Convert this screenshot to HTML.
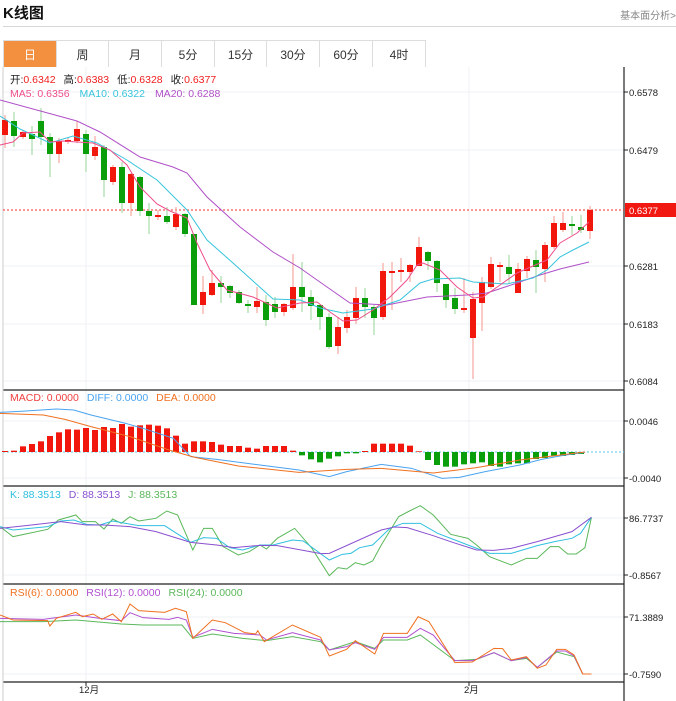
<!DOCTYPE html>
<html><head><meta charset="utf-8">
<style>
*{margin:0;padding:0;box-sizing:border-box}
body{width:676px;height:701px;background:#fff;font-family:"Liberation Sans","Noto Sans CJK SC",sans-serif;position:relative;overflow:hidden}
.title{position:absolute;left:3px;top:2px;font-size:15px;font-weight:bold;color:#111}
.link{position:absolute;right:0;top:7px;font-size:10px;color:#888}
.hr{position:absolute;left:3px;right:0;top:26px;height:1px;background:#d6d6d6}
.tabs{position:absolute;left:3px;top:40px;height:27px;display:flex;border-top:1px solid #ddd;border-left:1px solid #ddd}
.tab{height:26px;border-right:1px solid #ddd;font-size:12px;color:#333;display:flex;align-items:center;justify-content:center}
.tab.on{background:#f39040;color:#fff}
svg{position:absolute;left:0;top:0}
</style></head><body>
<div class="title">K线图</div>
<div class="link">基本面分析&gt;</div>
<div class="hr"></div>
<div class="tabs">
<div class="tab on" style="width:53px">日</div>
<div class="tab" style="width:52px">周</div>
<div class="tab" style="width:53px">月</div>
<div class="tab" style="width:53px">5分</div>
<div class="tab" style="width:52px">15分</div>
<div class="tab" style="width:53px">30分</div>
<div class="tab" style="width:53px">60分</div>
<div class="tab" style="width:53px">4时</div>
</div>
<svg id="s" width="676" height="701" xmlns="http://www.w3.org/2000/svg" font-family="Liberation Sans, Noto Sans CJK SC, sans-serif">
<g stroke="#edf1f4" stroke-width="1">
<line x1="3" y1="92" x2="624" y2="92"/><line x1="3" y1="150" x2="624" y2="150"/><line x1="3" y1="266" x2="624" y2="266"/><line x1="3" y1="324" x2="624" y2="324"/><line x1="3" y1="381" x2="624" y2="381"/>
<line x1="3" y1="421" x2="624" y2="421"/><line x1="3" y1="478" x2="624" y2="478"/>
<line x1="3" y1="518" x2="624" y2="518"/><line x1="3" y1="575" x2="624" y2="575"/>
<line x1="3" y1="617" x2="624" y2="617"/><line x1="3" y1="674" x2="624" y2="674"/>
<line x1="86" y1="67" x2="86" y2="682"/><line x1="469" y1="67" x2="469" y2="682"/>
</g>
<g stroke="#222" stroke-width="1.2">
<line x1="624" y1="67" x2="624" y2="701"/>
<line x1="3" y1="390" x2="624" y2="390"/><line x1="3" y1="486" x2="624" y2="486"/><line x1="3" y1="584" x2="624" y2="584"/><line x1="3" y1="682" x2="624" y2="682"/>
</g>
<line x1="3" y1="67" x2="3" y2="701" stroke="#ccc"/>
<g stroke="#222"><line x1="624" y1="92" x2="628" y2="92"/><line x1="624" y1="150" x2="628" y2="150"/><line x1="624" y1="266" x2="628" y2="266"/><line x1="624" y1="324" x2="628" y2="324"/><line x1="624" y1="381" x2="628" y2="381"/><line x1="624" y1="421" x2="628" y2="421"/><line x1="624" y1="478" x2="628" y2="478"/><line x1="624" y1="518" x2="628" y2="518"/><line x1="624" y1="575" x2="628" y2="575"/><line x1="624" y1="617" x2="628" y2="617"/><line x1="624" y1="674" x2="628" y2="674"/><line x1="86" y1="682" x2="86" y2="686"/><line x1="469" y1="682" x2="469" y2="686"/></g>
<g font-size="9.5" fill="#222">
<text x="629" y="96">0.6578</text><text x="629" y="154">0.6479</text><text x="629" y="270">0.6281</text><text x="629" y="328">0.6183</text><text x="629" y="385">0.6084</text>
<text x="629" y="425">0.0046</text><text x="629" y="482">-0.0040</text>
<text x="629" y="522">86.7737</text><text x="629" y="579">-0.8567</text>
<text x="629" y="621">71.3889</text><text x="629" y="678">-0.7590</text>
<text x="79" y="693">12月</text><text x="464" y="693">2月</text>
</g>
<line x1="3" y1="210" x2="624" y2="210" stroke="#f03030" stroke-dasharray="2,2"/>
<rect x="625" y="203" width="51" height="14" fill="#f01810"/>
<text x="629" y="214" font-size="9.5" fill="#fff">0.6377</text>
<line x1="3" y1="452" x2="624" y2="452" stroke="#5bc8e8" stroke-dasharray="2,2"/>
<g font-size="10.5">
<text x="10" y="83"><tspan fill="#222">开:</tspan><tspan fill="#f02020">0.6342</tspan><tspan fill="#222" dx="8">高:</tspan><tspan fill="#f02020">0.6383</tspan><tspan fill="#222" dx="8">低:</tspan><tspan fill="#f02020">0.6328</tspan><tspan fill="#222" dx="8">收:</tspan><tspan fill="#f02020">0.6377</tspan></text>
<text x="10" y="97"><tspan fill="#ee4d8a">MA5: 0.6356</tspan><tspan fill="#38c4dc" dx="10">MA10: 0.6322</tspan><tspan fill="#b050c8" dx="10">MA20: 0.6288</tspan></text>
<text x="10" y="401"><tspan fill="#f04040">MACD: 0.0000</tspan><tspan fill="#4aa3f0" dx="8">DIFF: 0.0000</tspan><tspan fill="#f07020" dx="8">DEA: 0.0000</tspan></text>
<text x="10" y="498"><tspan fill="#30c0e0">K: 88.3513</tspan><tspan fill="#8a50d0" dx="8">D: 88.3513</tspan><tspan fill="#5ab85a" dx="8">J: 88.3513</tspan></text>
<text x="10" y="596"><tspan fill="#f07020">RSI(6): 0.0000</tspan><tspan fill="#b050d0" dx="8">RSI(12): 0.0000</tspan><tspan fill="#5ab85a" dx="8">RSI(24): 0.0000</tspan></text>
</g>
<g id="dyn"></g>
</svg>
<script>
var NS="http://www.w3.org/2000/svg",g=document.getElementById("dyn");
function el(t,a){var e=document.createElementNS(NS,t);for(var k in a)e.setAttribute(k,a[k]);g.appendChild(e);return e;}
function pl(pts,c,w){el("polyline",{points:pts.map(function(p){return p[0]+","+p[1]}).join(" "),fill:"none",stroke:c,"stroke-width":w||1});}
function z(pts,y0){return pts.map(function(p){return [p[0]/2.308,y0+p[1]/3]});}
var C=[["r",120,135,115,148],["g",121,136,112,147],["r",132,137,130,139],["g",134,139,126,155],["g",121,137,108,145],["g",137,154,133,177],["r",141,154,138,163],["r",140,142,138,144],["r",129,141,121,143],["g",134,154,130,172],["r",147,156,136,160],["g",147,180,145,197],["r",167,182,165,185],["g",167,203,162,213],["r",174,203,173,216],["g",177,211,176,216],["g",211,216,203,234],["r",215,217,210,220],["g",216,222,207,224],["r",214,227,207,230],["g",214,234,213,237],["g",234,305,234,305],["r",292,305,276,314],["r",283,295,270,296],["g",283,287,276,303],["g",286,293,285,298],["g",292,303,290,304],["g",304,306,300,313],["r",301,307,287,313],["g",302,320,295,326],["g",304,312,297,318],["r",304,312,303,316],["r",287,308,254,310],["g",287,297,262,312],["g",297,306,290,320],["g",305,317,305,330],["g",317,347,313,349],["r",327,346,317,354],["r",317,328,310,333],["r",298,318,287,324],["g",298,307,288,318],["g",307,318,305,335],["r",271,317,263,320],["r",271,272,262,310],["r",270,272,258,282],["r",265,272,264,282],["r",247,266,237,266],["g",252,261,251,270],["g",261,283,260,292],["g",284,300,284,308],["g",298,309,288,314],["r",308,310,278,313],["r",299,338,292,379],["r",282,303,277,331],["r",264,287,257,289],["r",265,267,262,282],["g",267,274,255,283],["r",269,293,263,293],["r",259,271,256,278],["g",260,267,250,293],["r",245,269,242,282],["r",223,247,216,249],["r",223,230,212,232],["g",224,225,216,235],["g",227,230,215,233],["r",210,231,206,239]];
C.forEach(function(c,i){var x=5+9*i,col=c[0]=="r"?"#f2170c":"#0b9e0b",wc=c[0]=="r"?"#f7a8a0":"#a8dca8";
el("line",{x1:x,x2:x,y1:c[3],y2:c[4],stroke:wc,"stroke-width":1.2});
el("rect",{x:x-3,y:c[1],width:6,height:Math.max(2,c[2]-c[1]),fill:col});});
pl([[0,100],[77,121],[100,132],[140,157],[173,167],[187,173],[207,197],[240,227],[273,252],[300,268],[327,287],[350,303],[387,305],[427,297],[467,295],[487,293],[517,283],[540,275],[560,269],[589,262]],"#b050c8");
pl([[0,116],[20,129],[33,135],[50,143],[73,136],[97,143],[127,160],[157,180],[187,210],[207,240],[233,263],[273,299],[300,300],[320,308],[343,313],[373,309],[400,300],[420,283],[433,279],[460,278],[473,282],[507,284],[533,278],[547,270],[560,257],[573,250],[589,242]],"#38c4dc");
pl([[0,145],[13,142],[23,133],[40,132],[50,142],[63,141],[77,142],[93,143],[110,150],[127,165],[140,187],[157,204],[170,211],[187,218],[197,243],[210,270],[227,290],[253,297],[277,308],[300,303],[317,302],[330,312],[343,321],[357,320],[373,310],[390,297],[407,280],[417,265],[423,263],[440,270],[457,287],[473,298],[483,297],[500,285],[517,273],[533,266],[547,260],[560,243],[577,233],[589,222]],"#ee4d8a");
var M=[213,212,199,192,184,168,157,148,149,144,150,141,144,132,140,136,134,137,145,167,191,184,184,186,194,198,198,203,206,198,198,198,212,226,238,247,236,229,220,220,213,191,191,191,191,197,214,240,255,260,260,253,250,247,258,260,253,250,250,237,234,227,228,225,222];
M.forEach(function(v,i){var x=5+9*i,y=380+v/3,red=(i<33||(i>=40&&i<=46));
if(red){el("rect",{x:x-3,y:y,width:6,height:452-y,fill:"#f2170c"});}else{el("rect",{x:x-3,y:452,width:6,height:y-452,fill:"#0b9e0b"});}});
pl(z([[0,97],[60,93],[130,87],[170,90],[210,105],[290,130],[330,145],[400,175],[440,230],[500,238],[600,255],[690,270],[760,290],[800,275],[880,253],[950,265],[1020,295],[1060,292],[1120,275],[1200,255],[1250,238],[1300,226],[1350,217]],380),"#4aa3f0");
pl(z([[0,100],[100,105],[150,118],[210,140],[300,170],[390,210],[450,232],[550,258],[690,277],[800,268],[880,265],[1000,279],[1100,263],[1200,240],[1350,216]],380),"#f07020");
pl(z([[0,125],[30,155],[110,133],[135,105],[175,90],[190,110],[220,110],[240,132],[260,102],[280,115],[300,95],[320,108],[360,100],[385,78],[410,90],[445,195],[470,130],[490,130],[515,185],[550,210],[575,200],[600,180],[615,192],[640,160],[680,130],[720,190],[760,272],[780,248],[800,252],[820,233],[840,240],[860,228],[880,180],[920,95],[945,78],[970,62],[1000,90],[1040,148],[1080,160],[1100,180],[1130,215],[1180,240],[1215,220],[1240,220],[1270,185],[1290,185],[1310,207],[1330,207],[1350,188],[1365,97]],485),"#5ab85a");
pl(z([[0,125],[30,135],[110,125],[140,108],[170,105],[200,118],[230,120],[260,108],[290,115],[320,122],[380,122],[440,172],[470,158],[500,160],[530,188],[560,195],[600,180],[630,180],[675,165],[700,168],[760,225],[790,208],[810,205],[830,188],[860,180],[900,130],[930,115],[970,115],[1010,145],[1050,165],[1080,180],[1130,205],[1180,205],[1240,182],[1280,170],[1320,160],[1340,145],[1365,97]],485),"#30c0e0");
pl(z([[0,130],[60,122],[140,110],[200,120],[240,120],[300,125],[360,140],[440,172],[500,180],[540,188],[600,181],[640,182],[700,196],[740,206],[760,205],[880,135],[910,126],[940,128],[1000,152],[1040,170],[1100,195],[1140,196],[1180,190],[1240,170],[1280,155],[1320,140],[1365,97]],485),"#8a50d0");
pl(z([[0,125],[100,125],[175,120],[280,132],[330,135],[420,135],[445,175],[490,162],[560,175],[615,182],[675,170],[740,185],[760,210],[820,185],[865,205],[885,180],[940,180],[970,165],[1050,242],[1100,238],[1140,218],[1180,242],[1215,235],[1240,262],[1285,216],[1325,230],[1345,282],[1365,282]],580),"#5ab85a");
pl(z([[0,115],[100,118],[175,105],[230,115],[280,122],[300,98],[330,113],[390,118],[410,112],[430,120],[445,172],[490,148],[540,160],[600,165],[615,180],[675,158],[740,180],[760,210],[800,200],[820,188],[865,208],[885,172],[940,172],[970,145],[1000,165],[1050,242],[1090,242],[1140,218],[1180,242],[1215,232],[1240,262],[1285,213],[1305,213],[1325,228],[1345,282]],580),"#b050d0");
pl(z([[0,105],[30,120],[110,122],[115,138],[130,115],[175,97],[190,110],[215,102],[235,118],[260,102],[280,125],[300,72],[320,92],[380,97],[405,85],[430,95],[445,175],[490,120],[520,128],[565,158],[590,162],[595,152],[610,185],[675,135],[740,172],[760,228],[800,208],[820,182],[865,222],[885,160],[940,160],[965,110],[990,125],[1050,248],[1090,246],[1140,205],[1160,206],[1180,240],[1215,230],[1240,265],[1260,255],[1285,208],[1305,208],[1325,225],[1345,282],[1365,282]],580),"#f07020");
</script>
</body></html>
